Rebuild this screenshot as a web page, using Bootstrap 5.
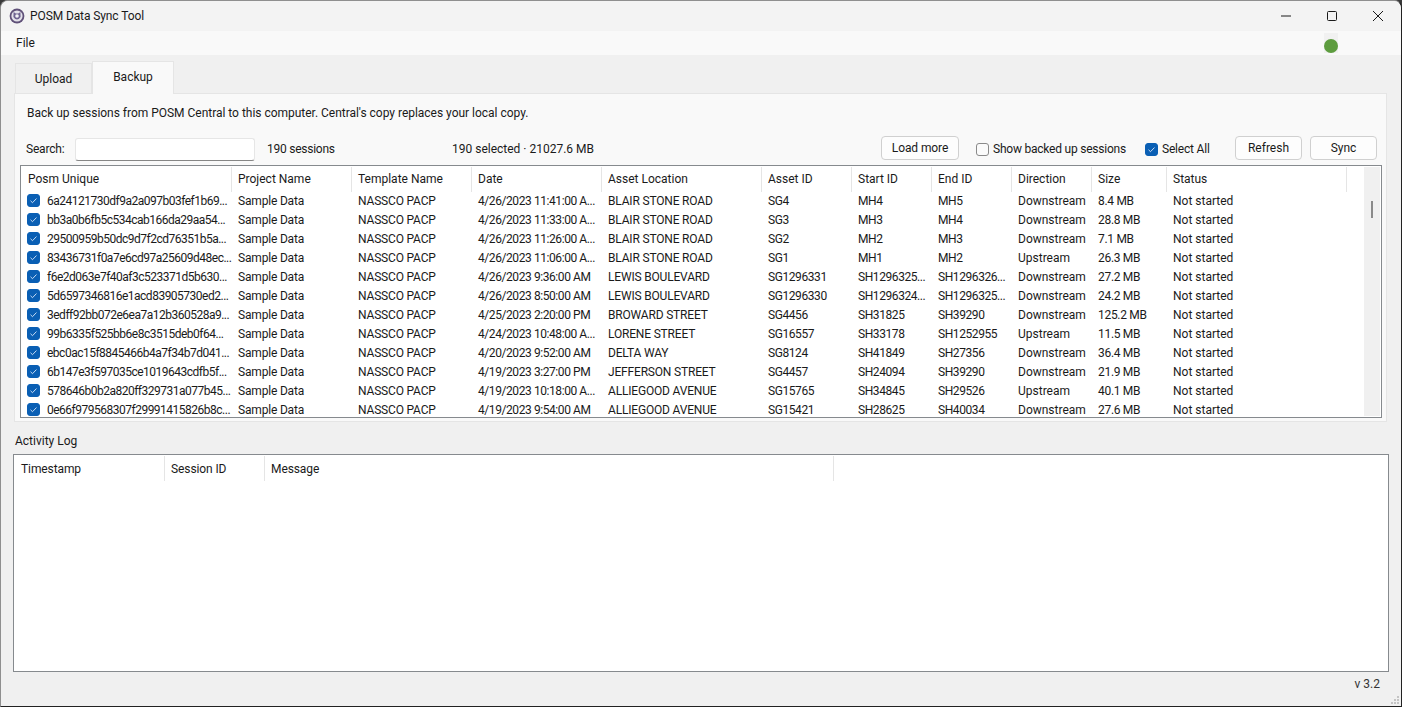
<!DOCTYPE html>
<html lang="en">
<head>
  <meta charset="UTF-8">
  <title>POSM Data Sync Tool</title>
  <link href="https://cdn.jsdelivr.net/npm/bootstrap@5.3.0/dist/css/bootstrap.min.css" rel="stylesheet">
  <style>
    html, body { height: 100%; }
    body {
      background: #3a3a3a;
      font-family: Roboto, "Liberation Sans", sans-serif;
      font-size: 12px;
      line-height: 16px;
      color: #1a1a1a;
      overflow: hidden;
    }
    .app-window {
      height: 707px;
      background: #f0f0f0;
      border: 1px solid #8f8f8f;
      border-bottom-color: #222;
      border-right-color: #222;
      border-radius: 8px 8px 0 0;
      overflow: hidden;
      position: relative;
    }
    .title-bar { height: 30px; background: #f3f3f3; padding-left: 8px; flex: none; }
    .app-icon { margin: -1px 5px 0 0; }
    .title-text { letter-spacing: -.1px; }
    .win-btn { width: 46px; height: 30px; }
    .menu-bar { height: 24px; background: #f9f9f9; padding-left: 15px; position: relative; flex: none; }
    .status-wrap {
      position: absolute; left: 1323px; top: 2px;
      width: 14px; height: 20px; background: #f1f1f1;
    }
    .status-dot {
      position: absolute; left: 0; bottom: 0;
      width: 14px; height: 14px; border-radius: 50%; background: #5d9c3f;
    }
    .tab-strip { padding: 6px 0 0 14px; height: 38px; border: 0; flex: none; }
    .tab-strip .nav-link {
      border: 1px solid #e5e5e5; border-bottom: 0; border-radius: 0;
      background: #f0f0f0; color: #1a1a1a; font-size: 12px;
      padding: 0; margin: 2px 0 0; height: 30px; width: 77px; text-align: center; line-height: 31px;
    }
    .tab-strip .nav-link.active {
      background: #f9f9f9; margin: 0; height: 33px; width: 82px; line-height: 30px;
      position: relative; z-index: 2; color: #1a1a1a;
    }
    .tab-pane-box {
      margin: 0 14px 0 13px; height: 329px; flex: none;
      background: #f9f9f9; border: 1px solid #e5e5e5;
      padding: 10px 4px 0 5px;
    }
    .hint-line { padding-left: 7px; height: 20px; line-height: 18px; letter-spacing: -.02px; }
    .tool-row { height: 41px; padding-top: 15px; position: relative; }
    .tool-row > * { flex: none; }
    .search-label { margin: 2px 0 0 6px; width: 49px; letter-spacing: -.2px; }
    .search-box {
      width: 180px; height: 23px; padding: 0 6px; font-size: 12px;
      border: 1px solid #e6e6e6; border-bottom-color: #868686; border-radius: 3px;
      background: #fff; margin-top: -1px;
    }
    .count-label { margin: 2px 0 0 12px; width: 185px; letter-spacing: -.25px; }
    .sel-label { margin-top: 2px; width: 429px; }
    .plain-btn {
      height: 24px; padding: 0; font-size: 12px; line-height: 20px; color: #1a1a1a;
      background: #fdfdfd; border: 1px solid #d0d0d0; border-radius: 4px; margin-top: -3px;
    }
    .plain-btn.load-btn { width: 78px; margin-right: 17px; letter-spacing: -.1px; }
    .plain-btn.act-btn { width: 67px; margin-left: 8px; }
    .plain-btn.first-act { margin-left: 25px; }
    .check-item { min-height: 0; margin: 0; padding: 0; display: flex; align-items: center; gap: 4px; height: 20px; }
    .check-item .form-check-input {
      float: none; margin: 1px 0 0; width: 13px; height: 13px; border-radius: 3px; border-color: #8a8a8a; background-color: #fbfbfb;
    }
    .check-show { width: 169px; letter-spacing: -.22px; }
    .check-all { width: 65px; letter-spacing: -.2px; }
    .form-check-input:checked[type=checkbox], .check-item .form-check-input:checked {
      background-color: #0a5fb4; border-color: #0a5fb4;
      background-image: url("data:image/svg+xml,%3csvg xmlns='http://www.w3.org/2000/svg' viewBox='0 0 13 13'%3e%3cpath fill='none' stroke='%23d5e4f7' stroke-width='1.1' d='M3 6.8l2.3 2.3L10 4.2'/%3e%3c/svg%3e");
    }
    .grid-frame {
      height: 253px; border: 1px solid #868a8e; background: #fff;
      overflow: hidden; position: relative;
    }
    .grid-frame table { table-layout: fixed; margin: 0; width: 1326px; border-collapse: separate; border-spacing: 0; }
    .grid-frame th, .grid-frame td {
      font-size: 12px; font-weight: 400; color: #1a1a1a; background: transparent; white-space: nowrap;
      overflow: hidden; padding: 0 0 0 6px; border: 0; box-shadow: none;
    }
    .grid-frame th { height: 26px; vertical-align: middle; position: relative; }
    .grid-frame th:first-child { padding-left: 7px; }
    .grid-frame th::after {
      content: ""; position: absolute; right: 0; top: 1px; height: 25px; width: 1px; background: #e5e5e5;
    }
    .grid-frame td { height: 19px; line-height: 19px; }
    .cell-hash { display: flex; align-items: center; gap: 7px; }
    .row-check { flex: none; margin: -2px 0 0; width: 13px; height: 13px; border-radius: 3px; }
    .ls-hash { letter-spacing: -.5px; }
    .ls-num { letter-spacing: -.42px; }
    .ls-size { letter-spacing: -.3px; }
    .ls-name { letter-spacing: -.18px; }
    .scroll-rail {
      position: absolute; right: 1px; top: 1px; bottom: 1px; width: 16px; background: #f0f0f0;
    }
    .scroll-thumb { position: absolute; left: 7px; top: 34px; width: 2px; height: 17px; background: #8a8a8a; }
    .log-title { margin: 11px 0 0 14px; height: 21px; line-height: 16px; flex: none; }
    .log-frame { margin: 0 12px; height: 218px; flex: none; }
    .log-frame table { width: 820px; }
    .grid-frame.log-frame th { padding-top: 2px; letter-spacing: -.1px; }
    .ver-line { text-align: right; padding: 4px 21px 0 0; line-height: 16px; color: #333; }
    .grip { position: absolute; right: 1px; bottom: 1px; }
  </style>
</head>
<body>
  <div class="app-window d-flex flex-column">
    <div class="title-bar d-flex align-items-center">
      <svg class="app-icon" width="16" height="16" viewBox="0 0 16 16">
        <circle cx="8" cy="8" r="7.4" fill="#5f5078"/>
        <circle cx="8" cy="8" r="5.6" fill="#e4e2ea"/>
        <path d="M4.6 4 L6.8 5.4 L9.2 5.4 L11.4 4 L11.6 9 Q8 14 4.4 9 Z" fill="#6f6390"/>
        <circle cx="8" cy="8" r="1.8" fill="#f3f2f6"/>
      </svg>
      <span class="title-text">POSM Data Sync Tool</span>
      <div class="ms-auto d-flex">
        <div class="win-btn d-flex align-items-center justify-content-center">
          <svg width="10" height="10" viewBox="0 0 10 10"><path d="M0 5 H10" stroke="#1a1a1a"/></svg>
        </div>
        <div class="win-btn d-flex align-items-center justify-content-center">
          <svg width="10" height="10" viewBox="0 0 10 10"><rect x=".5" y=".5" width="9" height="9" rx="1" fill="none" stroke="#1a1a1a"/></svg>
        </div>
        <div class="win-btn d-flex align-items-center justify-content-center">
          <svg width="10" height="10" viewBox="0 0 10 10"><path d="M0 0 L10 10 M10 0 L0 10" stroke="#1a1a1a"/></svg>
        </div>
      </div>
    </div>
    <div class="menu-bar d-flex align-items-center">File<span class="status-wrap"><span class="status-dot"></span></span></div>

    <ul class="nav tab-strip">
      <li class="nav-item"><a class="nav-link" href="#">Upload</a></li>
      <li class="nav-item"><a class="nav-link active" href="#">Backup</a></li>
    </ul>

    <div class="tab-pane-box">
      <div class="hint-line">Back up sessions from POSM Central to this computer. Central's copy replaces your local copy.</div>
      <div class="tool-row d-flex align-items-start">
        <span class="search-label">Search:</span>
        <input type="text" class="form-control search-box">
        <span class="count-label">190 sessions</span>
        <span class="sel-label">190 selected · 21027.6 MB</span>
        <button class="btn plain-btn load-btn">Load more</button>
        <label class="form-check check-item check-show"><input class="form-check-input" type="checkbox"> Show backed up sessions</label>
        <label class="form-check check-item check-all"><input class="form-check-input" type="checkbox" checked> Select All</label>
        <button class="btn plain-btn act-btn first-act">Refresh</button>
        <button class="btn plain-btn act-btn">Sync</button>
      </div>
      <div class="grid-frame">
        <table class="table">
          <colgroup id="sessionCols"></colgroup>
          <thead><tr id="sessionHead"></tr></thead>
          <tbody id="sessionBody"></tbody>
        </table>
        <div class="scroll-rail"><div class="scroll-thumb"></div></div>
      </div>
    </div>

    <div class="log-title">Activity Log</div>
    <div class="grid-frame log-frame">
      <table class="table">
        <colgroup><col style="width:151px"><col style="width:100px"><col style="width:569px"></colgroup>
        <thead><tr><th>Timestamp</th><th>Session ID</th><th>Message</th></tr></thead>
      </table>
    </div>
    <div class="ver-line">v 3.2</div>
    <svg class="grip" width="10" height="10" viewBox="0 0 10 10" fill="#c4c4c4">
      <rect x="7" y="1" width="2" height="2"/><rect x="4" y="4" width="2" height="2"/><rect x="7" y="4" width="2" height="2"/>
      <rect x="1" y="7" width="2" height="2"/><rect x="4" y="7" width="2" height="2"/><rect x="7" y="7" width="2" height="2"/>
    </svg>
  </div>

  <script src="https://cdn.jsdelivr.net/npm/bootstrap@5.3.0/dist/js/bootstrap.bundle.min.js"></script>
  <script>
    const widths = [211, 120, 120, 130, 160, 90, 80, 80, 80, 75, 180];
    const heads = ["Posm Unique", "Project Name", "Template Name", "Date", "Asset Location", "Asset ID", "Start ID", "End ID", "Direction", "Size", "Status"];
    const rows = [
      ["6a24121730df9a2a097b03fef1b69...", "4/26/2023 11:41:00 A...", "BLAIR STONE ROAD", "SG4", "MH4", "MH5", "Downstream", "8.4 MB"],
      ["bb3a0b6fb5c534cab166da29aa54...", "4/26/2023 11:33:00 A...", "BLAIR STONE ROAD", "SG3", "MH3", "MH4", "Downstream", "28.8 MB"],
      ["29500959b50dc9d7f2cd76351b5a...", "4/26/2023 11:26:00 A...", "BLAIR STONE ROAD", "SG2", "MH2", "MH3", "Downstream", "7.1 MB"],
      ["83436731f0a7e6cd97a25609d48ec...", "4/26/2023 11:06:00 A...", "BLAIR STONE ROAD", "SG1", "MH1", "MH2", "Upstream", "26.3 MB"],
      ["f6e2d063e7f40af3c523371d5b630...", "4/26/2023 9:36:00 AM", "LEWIS BOULEVARD", "SG1296331", "SH1296325...", "SH1296326...", "Downstream", "27.2 MB"],
      ["5d6597346816e1acd83905730ed2...", "4/26/2023 8:50:00 AM", "LEWIS BOULEVARD", "SG1296330", "SH1296324...", "SH1296325...", "Downstream", "24.2 MB"],
      ["3edff92bb072e6ea7a12b360528a9...", "4/25/2023 2:20:00 PM", "BROWARD STREET", "SG4456", "SH31825", "SH39290", "Downstream", "125.2 MB"],
      ["99b6335f525bb6e8c3515deb0f64...", "4/24/2023 10:48:00 A...", "LORENE STREET", "SG16557", "SH33178", "SH1252955", "Upstream", "11.5 MB"],
      ["ebc0ac15f8845466b4a7f34b7d041...", "4/20/2023 9:52:00 AM", "DELTA WAY", "SG8124", "SH41849", "SH27356", "Downstream", "36.4 MB"],
      ["6b147e3f597035ce1019643cdfb5f...", "4/19/2023 3:27:00 PM", "JEFFERSON STREET", "SG4457", "SH24094", "SH39290", "Downstream", "21.9 MB"],
      ["578646b0b2a820ff329731a077b45...", "4/19/2023 10:18:00 A...", "ALLIEGOOD AVENUE", "SG15765", "SH34845", "SH29526", "Upstream", "40.1 MB"],
      ["0e66f979568307f29991415826b8c...", "4/19/2023 9:54:00 AM", "ALLIEGOOD AVENUE", "SG15421", "SH28625", "SH40034", "Downstream", "27.6 MB"]
    ];
    // letter spacing per column, digits run wider here than in the original font
    const tight = ["ls-num", "ls-name", "ls-num", "ls-num", "ls-num", "", "ls-size"];
    document.getElementById("sessionCols").innerHTML = widths.map(w => `<col style="width:${w}px">`).join("");
    document.getElementById("sessionHead").innerHTML = heads.map(h => `<th>${h}</th>`).join("");
    document.getElementById("sessionBody").innerHTML = rows.map(r => `<tr>
      <td><div class="cell-hash"><input class="form-check-input row-check" type="checkbox" checked><span class="ls-hash">${r[0]}</span></div></td>
      <td class="ls-name">Sample Data</td><td class="ls-name">NASSCO PACP</td>
      ${r.slice(1).map((c, i) => `<td class="${tight[i]}">${c}</td>`).join("")}
      <td>Not started</td></tr>`).join("");
  </script>
</body>
</html>
